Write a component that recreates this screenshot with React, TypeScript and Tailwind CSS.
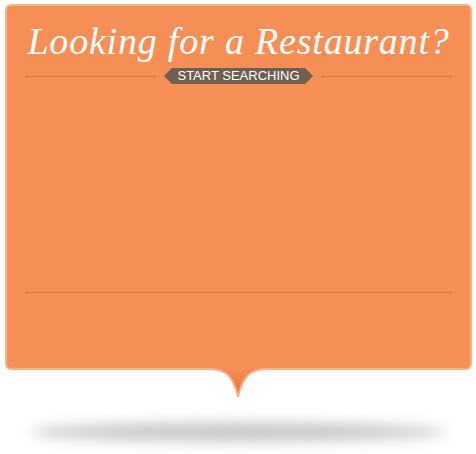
export default function App() {
  return (
    <div className="relative h-[454px] w-[476px] bg-white font-['Liberation_Sans',Arial,sans-serif]">
      {/* Card */}
      <div className="absolute left-[5px] top-[4px] flex h-[366px] w-[467px] flex-col rounded-[6px] border-2 border-[#fbb287] bg-[#f68f56] px-[18px]">
        <h1 className="mt-[13px] text-center font-['Liberation_Serif',Georgia,serif] text-[38px] italic leading-[44px] tracking-[0.8px] text-white">
          Looking for a Restaurant?
        </h1>

        <div className="mt-[5px] flex items-center">
          <div className="h-px flex-1 bg-[#e2703b]" />
          <div className="mx-[8px] flex h-[16px] items-center">
            <svg width="8" height="16" viewBox="0 0 8 16"><path d="M8 0 L0 8 L8 16 Z" fill="#6f5e52" /></svg>
            <span className="bg-[#6f5e52] px-[5px] text-[13px] leading-[16px] text-white">START SEARCHING</span>
            <svg width="8" height="16" viewBox="0 0 8 16"><path d="M0 0 L8 8 L0 16 Z" fill="#6f5e52" /></svg>
          </div>
          <div className="h-px flex-1 bg-[#e2703b]" />
        </div>

        <div className="mt-[208px] h-px bg-[#e2703b]" />
      </div>

      {/* Tail */}
      <svg className="absolute left-[206px] top-[365px]" width="64" height="34" viewBox="0 0 64 34">
        <defs>
          <linearGradient id="tg" x1="0" y1="0" x2="0" y2="1">
            <stop offset="0" stopColor="#f68f56" />
            <stop offset="1" stopColor="#ee6f2f" />
          </linearGradient>
        </defs>
        <path d="M0 3 C16 3 26 6 32 32 C38 6 48 3 64 3 L64 0 L0 0 Z" fill="#f68f56" />
        <path d="M2 4 C17 4 27 8 32 32 C37 8 47 4 62 4" fill="url(#tg)" stroke="#fbb287" strokeWidth="2" />
        <rect x="0" y="0" width="64" height="3" fill="#f68f56" />
      </svg>

      {/* Shadow */}
      <div className="absolute left-[30px] top-[423px] h-[18px] w-[416px] rounded-[50%] bg-[#c4c4c4] blur-[7px]" />
    </div>
  )
}
